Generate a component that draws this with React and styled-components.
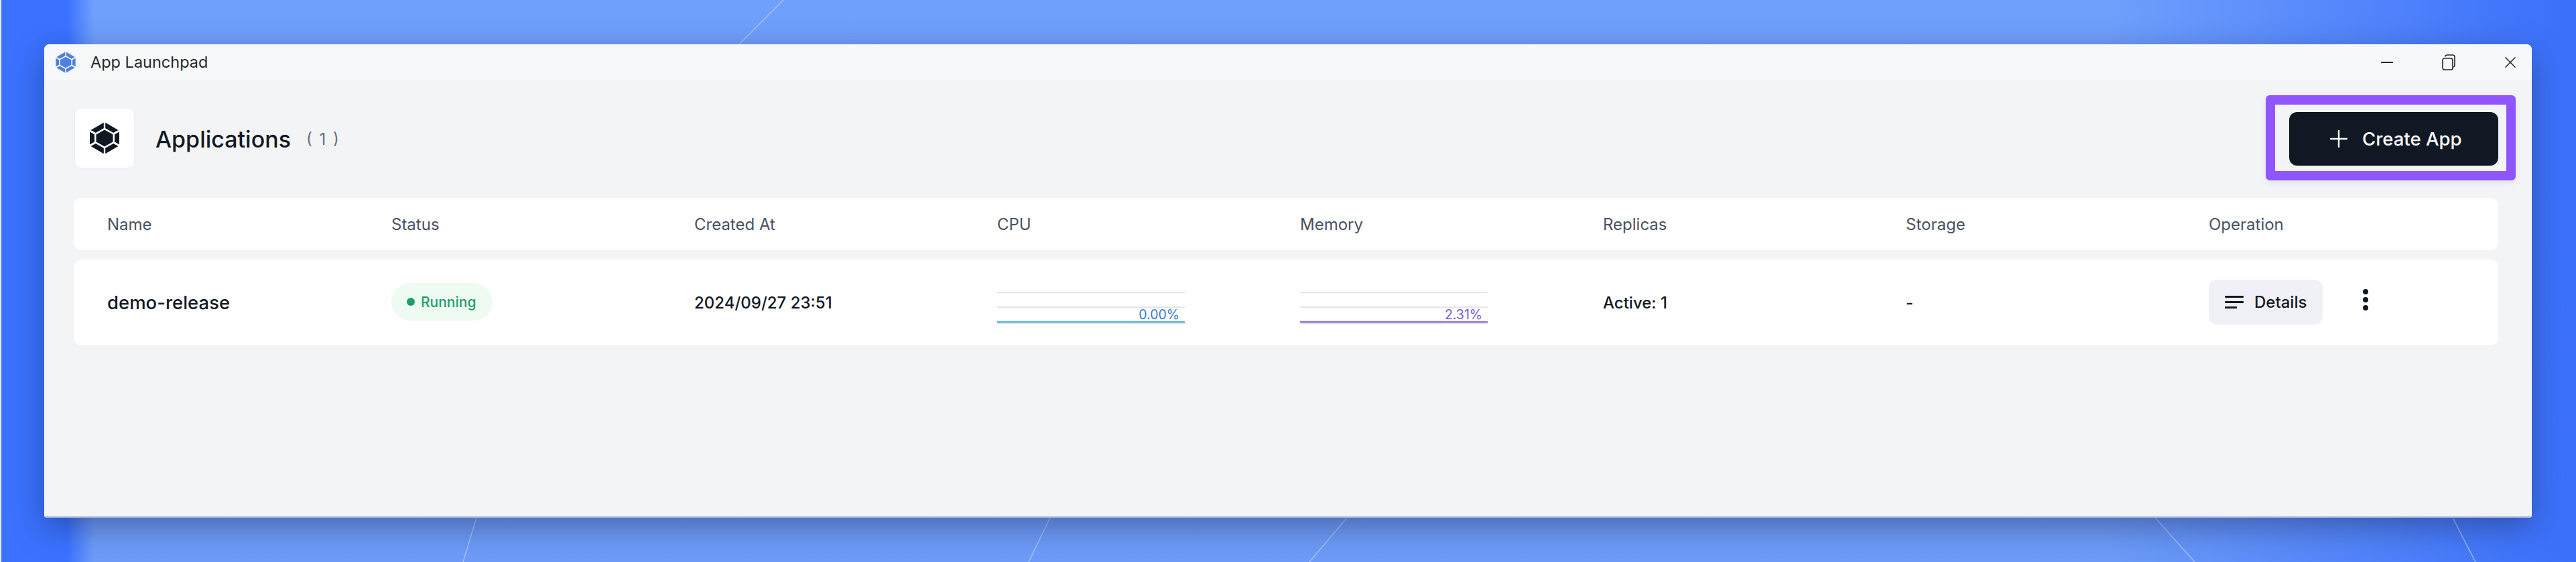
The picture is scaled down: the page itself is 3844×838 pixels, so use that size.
import styled, { createGlobalStyle } from 'styled-components'

const GlobalStyle = createGlobalStyle`
  html, body {
    margin: 0;
    padding: 0;
    background: #3a72ff;
  }
  * {
    box-sizing: border-box;
  }
`
const Desktop = styled.div`
  position: relative;
  width: 3844px;
  height: 838px;
  padding: 66px;
  overflow: hidden;
  font-family: Inter, "Liberation Sans", sans-serif;
  background:
    linear-gradient(90deg, #dfe8ff 0, #dfe8ff 2px, rgba(223, 232, 255, 0) 2px),
    linear-gradient(90deg, #3a72ff 0, #3a72ff 100px, rgba(58, 114, 255, 0) 140px),
    linear-gradient(270deg, #3a6ffb 0, rgba(58, 111, 251, 0) 700px),
    linear-gradient(180deg, #709ffc 0, #6e9cf8 100%);
`
const Wallpaper = styled.svg`
  position: absolute;
  left: 0;
  top: 0;
`
const Window = styled.div`
  position: relative;
  display: flex;
  flex-direction: column;
  height: 706px;
  background: #f3f4f6;
  border-radius: 8px 8px 3px 3px;
  border-bottom: 2px solid #aab6de;
  box-shadow: 0 14px 48px rgba(20, 30, 70, 0.42);
  overflow: hidden;
`
const TitleBar = styled.div`
  display: flex;
  align-items: center;
  height: 53px;
  padding: 0 24px 0 17px;
  background: #f7f8fa;
  flex-shrink: 0;
`
const WindowName = styled.div`
  margin-left: 22px;
  font-size: 23.5px;
  color: #24282c;
  flex: 1;
`
const WinControls = styled.div`
  display: flex;
  align-items: center;
`
const WinBtn = styled.svg`
  display: block;
  margin-left: ${(p) => p.$gap}px;
`
const Header = styled.div`
  display: flex;
  align-items: center;
  justify-content: space-between;
  height: 176px;
  padding: 0 24px 3px 45px;
  flex-shrink: 0;
`
const HeaderLeft = styled.div`
  display: flex;
  align-items: center;
`
const LogoTile = styled.div`
  display: flex;
  align-items: center;
  justify-content: center;
  width: 90px;
  height: 90px;
  background: #ffffff;
  border: 1px solid #eceef3;
  border-radius: 9px;
`
const PageTitle = styled.div`
  margin-left: 31px;
  margin-top: 3px;
  font-size: 34px;
  font-weight: 500;
  color: #111824;
`
const Count = styled.div`
  margin-left: 23px;
  margin-top: 3px;
  font-size: 24px;
  color: #667085;
  word-spacing: 4px;
`
const Highlight = styled.div`
  padding: 11px 12px 8px 21px;
  border: 14px solid #8f56ff;
  border-radius: 6px;
  box-shadow: 0 3px 8px rgba(100, 110, 160, 0.12);
`
const CreateButton = styled.div`
  display: flex;
  align-items: center;
  width: 312px;
  height: 80px;
  padding-left: 61px;
  background: #111824;
  border-radius: 12px;
  color: #ffffff;
  font-size: 27.5px;
  font-weight: 500;
`
const CreateLabel = styled.span`
  margin-left: 22px;
`
const Rows = styled.div`
  display: flex;
  flex-direction: column;
  gap: 14px;
  padding: 0 50px 0 44px;
`
const Row = styled.div`
  display: grid;
  grid-template-columns: 424px repeat(6, 452px) 1fr;
  align-items: center;
  height: ${(p) => p.$height}px;
  padding-left: 50px;
  background: #ffffff;
  border-radius: 12px;
`
const HeadCell = styled.div`
  font-size: 24px;
  color: #485264;
`
const AppName = styled.div`
  font-size: 27.5px;
  font-weight: 500;
  color: #111824;
`
const Cell = styled.div`
  font-size: 24px;
  font-weight: 500;
  color: #111824;
`
const StatusPill = styled.div`
  display: flex;
  align-items: center;
  width: 151px;
  height: 56px;
  margin-top: -2px;
  padding-left: 23px;
  background: #edfbf3;
  border-radius: 28px;
  color: #1f9e6a;
  font-size: 21px;
  font-weight: 500;
`
const StatusDot = styled.span`
  width: 12px;
  height: 12px;
  margin-right: 9px;
  border-radius: 50%;
  background: #1f9e6a;
`
const Chart = styled.div`
  position: relative;
  width: 280px;
  height: 48px;
  margin-top: 16px;
`
const ChartGrid = styled.svg`
  display: block;
`
const ChartValue = styled.div`
  position: absolute;
  right: 0;
  bottom: 4px;
  padding: 0 8px 0 4px;
  background: #ffffff;
  font-size: 19.5px;
  line-height: 19px;
  color: ${(p) => p.$color};
`
const Operation = styled.div`
  display: flex;
  align-items: center;
`
const DetailsButton = styled.div`
  display: flex;
  align-items: center;
  width: 170px;
  height: 67px;
  margin-top: -2px;
  padding-left: 24px;
  background: #f0f1f6;
  border-radius: 12px;
  font-size: 24px;
  font-weight: 500;
  color: #111824;
`
const DetailsLabel = styled.span`
  margin-left: 16px;
`
const MoreDots = styled.svg`
  display: block;
  margin-left: 60px;
  margin-top: -8px;
`

function HexLogo({ width, height, color }) {
  return (
    <svg width={width} height={height} viewBox="0 0 44 48" fill={color}>
      <polygon points="20.8,0.8 20.8,9.3 8.8,16 1.5,12" />
      <polygon points="23.2,0.8 23.2,9.3 35.2,16 42.5,12" />
      <polygon points="0,14.5 7,18.5 7,29.5 0,33.5" />
      <polygon points="44,14.5 37,18.5 37,29.5 44,33.5" />
      <polygon points="1.5,36 8.8,32 20.8,38.7 20.8,47.2" />
      <polygon points="42.5,36 35.2,32 23.2,38.7 23.2,47.2" />
      <polygon points="22,11.5 34.5,18.5 34.5,29.5 22,36.5 9.5,29.5 9.5,18.5" />
    </svg>
  )
}

function UsageChart({ value, lineColor, textColor }) {
  return (
    <Chart>
      <ChartGrid width="280" height="48" viewBox="0 0 280 48">
        <line x1="0" x2="280" y1="1" y2="1" stroke="#e3e5ea" strokeWidth="2" />
        <line x1="0" x2="280" y1="23" y2="23" stroke="#e3e5ea" strokeWidth="2" />
        <line x1="0" x2="280" y1="47" y2="47" stroke="#e3e5ea" strokeWidth="2" />
        <line x1="0" x2="280" y1="45" y2="45" stroke={lineColor} strokeWidth="2.5" />
      </ChartGrid>
      <ChartValue $color={textColor}>{value}</ChartValue>
    </Chart>
  )
}

const columns = ['Name', 'Status', 'Created At', 'CPU', 'Memory', 'Replicas', 'Storage', 'Operation']

export default function App() {
  return (
    <>
      <GlobalStyle />
      <Desktop>
        <Wallpaper width="3844" height="838" viewBox="0 0 3844 838" fill="none" stroke="#c3d2f2" strokeWidth="1.5" strokeOpacity="0.7">
          <line x1="1169" y1="0" x2="1103" y2="66" />
          <line x1="711" y1="772" x2="691" y2="838" />
          <line x1="1567" y1="772" x2="1535" y2="838" />
          <line x1="2010" y1="772" x2="1954" y2="838" />
          <line x1="3216" y1="772" x2="3275" y2="838" />
          <line x1="3660" y1="772" x2="3694" y2="838" />
        </Wallpaper>
        <Window>
          <TitleBar>
            <HexLogo width={30} height={32} color="#4f80e0" />
            <WindowName>App Launchpad</WindowName>
            <WinControls>
              <WinBtn $gap={0} width="18" height="2" viewBox="0 0 18 2">
                <rect width="18" height="2" fill="#24282c" />
              </WinBtn>
              <WinBtn $gap={73} width="20" height="24" viewBox="0 0 20 24" fill="none" stroke="#24282c" strokeWidth="1.6">
                <rect x="1" y="6" width="15" height="17" rx="3" />
                <path d="M5 3.5 Q5 1 8 1 H16 Q19 1 19 4 V16 Q19 18.5 16.5 19" />
              </WinBtn>
              <WinBtn $gap={74} width="16" height="16" viewBox="0 0 16 16" stroke="#24282c" strokeWidth="1.5">
                <path d="M0.5 0.5 L15.5 15.5 M15.5 0.5 L0.5 15.5" />
              </WinBtn>
            </WinControls>
          </TitleBar>
          <Header>
            <HeaderLeft>
              <LogoTile>
                <HexLogo width={44} height={48} color="#111824" />
              </LogoTile>
              <PageTitle>Applications</PageTitle>
              <Count>( 1 )</Count>
            </HeaderLeft>
            <Highlight>
              <CreateButton>
                <svg width="26" height="26" viewBox="0 0 26 26" stroke="#ffffff" strokeWidth="2.4" strokeLinecap="round">
                  <path d="M13 1 V25 M1 13 H25" />
                </svg>
                <CreateLabel>Create App</CreateLabel>
              </CreateButton>
            </Highlight>
          </Header>
          <Rows>
            <Row $height={78}>
              {columns.map((name) => (
                <HeadCell key={name}>{name}</HeadCell>
              ))}
            </Row>
            <Row $height={128}>
              <AppName>demo-release</AppName>
              <StatusPill>
                <StatusDot />
                Running
              </StatusPill>
              <Cell>2024/09/27 23:51</Cell>
              <UsageChart value="0.00%" lineColor="#55b4e0" textColor="#3a78c9" />
              <UsageChart value="2.31%" lineColor="#8774ee" textColor="#6f5dd7" />
              <Cell>Active: 1</Cell>
              <Cell>-</Cell>
              <Operation>
                <DetailsButton>
                  <svg width="28" height="20" viewBox="0 0 28 20" fill="#111824">
                    <rect x="0" y="1" width="28" height="3" rx="1" />
                    <rect x="0" y="9" width="28" height="3" rx="1" />
                    <rect x="0" y="17" width="18" height="3" rx="1" />
                  </svg>
                  <DetailsLabel>Details</DetailsLabel>
                </DetailsButton>
                <MoreDots width="8" height="32" viewBox="0 0 8 32" fill="#111824">
                  <circle cx="4" cy="4" r="4" />
                  <circle cx="4" cy="16" r="4" />
                  <circle cx="4" cy="28" r="4" />
                </MoreDots>
              </Operation>
            </Row>
          </Rows>
        </Window>
      </Desktop>
    </>
  )
}
